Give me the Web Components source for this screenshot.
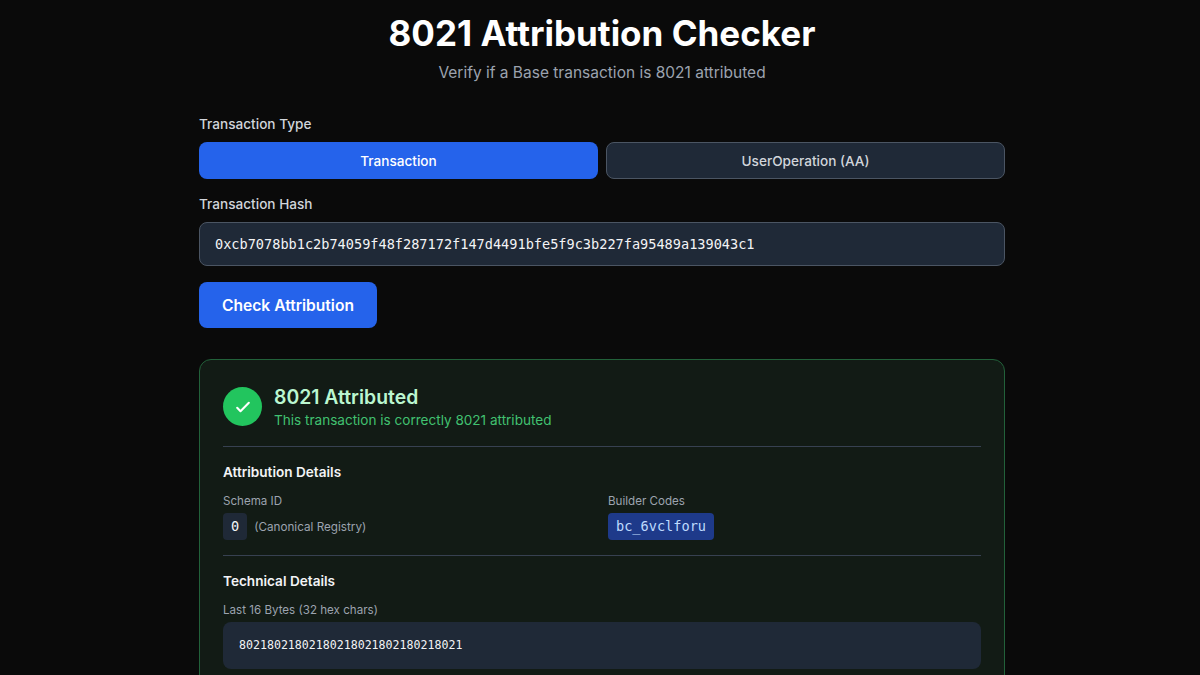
<!DOCTYPE html>
<html>
<head>
<meta charset="utf-8">
<title>8021 Attribution Checker</title>
<style>
    html, body {
        margin: 0;
        height: 675px;
        overflow: hidden;
        background: #0a0a0a;
        font-family: Inter, "Liberation Sans", sans-serif;
    }
</style>
</head>
<body>
<attr-checker></attr-checker>

<script>
const MONO = `"DejaVu Sans Mono", "Liberation Mono", monospace`;

class AttrToggle extends HTMLElement {
    constructor() {
        super();
        this.attachShadow({ mode: "open" });
        this.shadowRoot.innerHTML = `
<style>
    :host {
        display: grid;
        grid-template-columns: 1fr 1fr;
        gap: 8px;
    }
    .opt {
        height: 37px;
        box-sizing: border-box;
        display: flex;
        align-items: center;
        justify-content: center;
        border-radius: 8px;
        font-size: 13.6px;
        font-weight: 500;
    }
    .on {
        background: #2563eb;
        color: #fff;
    }
    .off {
        background: #1f2937;
        border: 1px solid #4b5563;
        color: #d1d5db;
    }
</style>
<div class="opt on">Transaction</div>
<div class="opt off">UserOperation (AA)</div>`;
    }
}

class AttrResult extends HTMLElement {
    constructor() {
        super();
        this.attachShadow({ mode: "open" });
        this.shadowRoot.innerHTML = `
<style>
    :host {
        display: block;
        box-sizing: border-box;
        background: #121b15;
        border: 1px solid #22613a;
        border-radius: 12px;
        padding: 23px 23px 24px;
    }
    .head {
        display: flex;
        align-items: center;
        gap: 12px;
        padding-bottom: 16px;
    }
    .icon {
        width: 39px;
        height: 39px;
        border-radius: 50%;
        background: #22c55e;
        display: flex;
        align-items: center;
        justify-content: center;
        flex-shrink: 0;
    }
    .title {
        padding-top: 2px;
        font-size: 19.4px;
        line-height: 25px;
        font-weight: 600;
        color: #bbf7d0;
    }
    .sub {
        font-size: 13.55px;
        line-height: 20px;
        color: #4ade80;
        opacity: 0.85;
    }
    .section {
        border-top: 1px solid #374151;
        padding: 16px 0 15px;
    }
    h3 {
        margin: 0 0 12px;
        font-size: 13.6px;
        line-height: 18px;
        font-weight: 600;
        color: #f3f4f6;
    }
    .cols {
        display: grid;
        grid-template-columns: 1fr 1fr;
        gap: 12px;
    }
    .label {
        font-size: 11.6px;
        line-height: 16px;
        color: #9ca3af;
        margin-bottom: 4px;
    }
    .row {
        display: flex;
        align-items: center;
        gap: 7px;
    }
    code {
        font-family: ${MONO};
        font-size: 13.6px;
        line-height: 19px;
        padding: 4px 8px;
        border-radius: 4px;
        display: block;
    }
    .schema {
        background: #1f2937;
        color: #f3f4f6;
    }
    .note {
        font-size: 11.7px;
        color: #9ca3af;
    }
    .builder {
        background: #1e3a8a;
        color: #bfdbfe;
    }
    .bytes {
        background: #1f2937;
        border-radius: 8px;
        padding: 16px;
        font-family: ${MONO};
        font-size: 11.6px;
        line-height: 15px;
        color: #f3f4f6;
    }
</style>
<div class="head">
    <div class="icon">
        <svg width="20" height="20" viewBox="0 0 24 24" fill="none" stroke="#fff" stroke-width="2.5" stroke-linecap="round" stroke-linejoin="round"><path d="M5 13l4 4L19 7"/></svg>
    </div>
    <div>
        <div class="title">8021 Attributed</div>
        <div class="sub">This transaction is correctly 8021 attributed</div>
    </div>
</div>
<div class="section">
    <h3>Attribution Details</h3>
    <div class="cols">
        <div>
            <div class="label">Schema ID</div>
            <div class="row"><code class="schema">0</code><span class="note">(Canonical Registry)</span></div>
        </div>
        <div>
            <div class="label">Builder Codes</div>
            <div class="row"><code class="builder">bc_6vclforu</code></div>
        </div>
    </div>
</div>
<div class="section">
    <h3>Technical Details</h3>
    <div class="label">Last 16 Bytes (32 hex chars)</div>
    <div class="bytes">80218021802180218021802180218021</div>
</div>`;
    }
}

class AttrChecker extends HTMLElement {
    constructor() {
        super();
        this.attachShadow({ mode: "open" });
        this.shadowRoot.innerHTML = `
<style>
    :host {
        display: block;
        width: 806px;
        margin-left: 199px;
        padding-top: 11px;
    }
    h1 {
        margin: 0;
        text-align: center;
        font-size: 35px;
        line-height: 44px;
        font-weight: 700;
        color: #fff;
    }
    .tagline {
        margin-top: 6px;
        text-align: center;
        font-size: 15.5px;
        line-height: 24px;
        color: #9ca3af;
        margin-bottom: 29px;
    }
    label {
        display: block;
        font-size: 13.6px;
        line-height: 21px;
        font-weight: 500;
        color: #d1d5db;
        margin-bottom: 7px;
    }
    .hash-label {
        margin-top: 15px;
    }
    .hash {
        box-sizing: border-box;
        height: 44px;
        display: flex;
        align-items: center;
        padding: 0 15px;
        background: #1f2937;
        border: 1px solid #4b5563;
        border-radius: 8px;
        font-family: ${MONO};
        font-size: 13.58px;
        color: #f3f4f6;
    }
    .check {
        width: 178px;
        height: 46px;
        margin-top: 16px;
        display: flex;
        align-items: center;
        justify-content: center;
        background: #2563eb;
        border-radius: 8px;
        color: #fff;
        font-size: 15.6px;
        font-weight: 600;
    }
    attr-result {
        margin-top: 31px;
    }
</style>
<h1>8021 Attribution Checker</h1>
<div class="tagline">Verify if a Base transaction is 8021 attributed</div>
<label>Transaction Type</label>
<attr-toggle></attr-toggle>
<label class="hash-label">Transaction Hash</label>
<div class="hash">0xcb7078bb1c2b74059f48f287172f147d4491bfe5f9c3b227fa95489a139043c1</div>
<div class="check">Check Attribution</div>
<attr-result></attr-result>`;
    }
}

customElements.define("attr-toggle", AttrToggle);
customElements.define("attr-result", AttrResult);
customElements.define("attr-checker", AttrChecker);
</script>
</body>
</html>
